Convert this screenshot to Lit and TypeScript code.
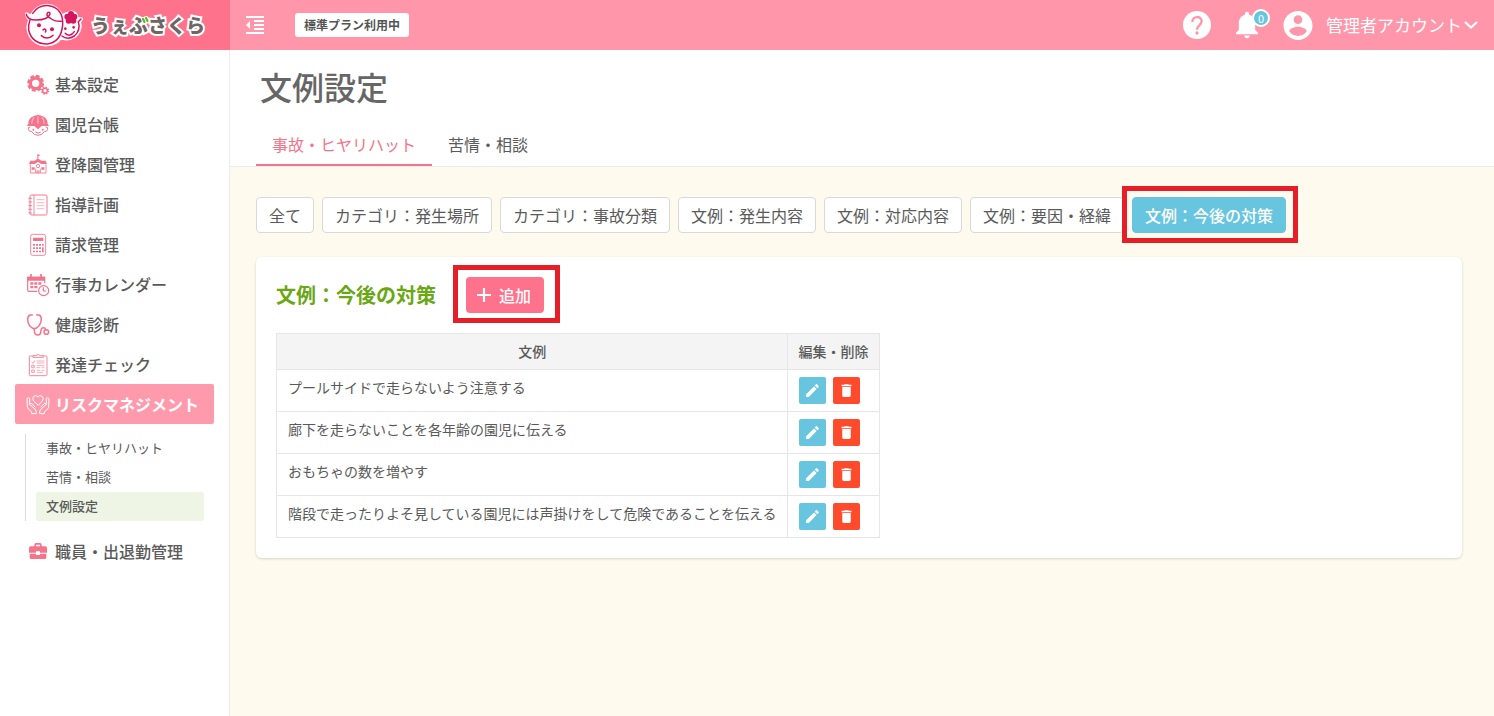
import { LitElement, html, css, svg } from "lit";
import { customElement, property, state } from "lit/decorators.js";
import { classMap } from "lit/directives/class-map.js";

const icons: Record<string, unknown> = {
  gears: svg`
    <g fill="none" stroke="currentColor">
      <circle cx="26" cy="31" r="16" stroke-width="10"/>
      <circle cx="26" cy="31" r="21.500" stroke-width="8" stroke-dasharray="11 5.880"/>
      <circle cx="54" cy="53" r="7" stroke-width="4.500"/>
      <circle cx="54" cy="53" r="10" stroke-width="4.500" stroke-dasharray="4.600 3.250"/>
    </g>`,
  child: svg`
    <path fill="currentColor" d="M4 32C4 16 17 8 30 7Q33 2 36 7C49 8 62 16 62 32L66 39H0Z"/>
    <g fill="none" stroke="#fff" stroke-width="1.800"><path d="M33 10V32M21 12Q15 21 14 32M45 12Q51 21 52 32"/></g>
    <g fill="none" stroke="currentColor" stroke-width="3">
      <path d="M10 42Q2 42 4 49Q6 56 14 56Q21 67 33 67Q45 67 52 56Q60 56 62 49Q64 42 56 42"/>
      <path d="M25 57Q33 64 41 57"/>
    </g>
    <g fill="currentColor"><path d="M22 39H44L33 49Z"/><circle cx="19" cy="50" r="3"/><circle cx="47" cy="50" r="3"/></g>`,
  school: svg`
    <g fill="currentColor">
      <path d="M32 3L40 7L34 10V17L43 23H56L60 33H43L33 27L23 33H6L10 23H23L31 17V3Z"/>
      <path d="M14 43h9v7h-9zM43 43h9v7h-9zM29 52h3v9h-3zM34 52h3v9h-3z"/>
    </g>
    <g fill="none" stroke="currentColor" stroke-width="2.600">
      <path d="M10 34V60H26V47M57 34V60H40V47M26 60H40"/><circle cx="33" cy="39" r="5"/>
    </g>`,
  notebook: svg`
    <g fill="none" stroke="currentColor" stroke-width="3">
      <rect x="9" y="6" width="51" height="60" rx="5"/><path d="M21 6V66" stroke-width="2.500"/>
      <path d="M4 16h11M4 27h11M4 38h11M4 49h11M4 60h11" stroke-width="2.600"/>
      <path d="M29 20H52M29 29H52M29 38H52M29 47H52" stroke-width="1.600"/>
    </g>`,
  calculator: svg`
    <rect x="11" y="4" width="45" height="63" rx="6" fill="none" stroke="currentColor" stroke-width="2.600"/>
    <path fill="currentColor" d="M18 14h31v10H18zM18 33h6v5h-6zM27 33h6v5h-6zM36 33h6v5h-6zM45 33h5v5h-5zM18 43h6v5h-6zM27 43h6v5h-6zM36 43h6v5h-6zM18 53h6v5h-6zM27 53h6v5h-6zM36 53h6v5h-6zM45 43h5v15h-5z"/>`,
  calendar: svg`
    <g fill="none" stroke="currentColor" stroke-width="3.500">
      <path d="M31 55H6Q2 55 2 51V13H53V31"/>
      <path d="M12 3V12M42 3V12" stroke-width="5"/>
      <circle cx="50" cy="53" r="15"/><path d="M49 43V54H58"/>
    </g>
    <path fill="currentColor" d="M1 11H54V23H1zM10 28h9v7h-9zM22 28h9v7h-9zM34 28h9v7h-9zM10 39h9v7h-9zM22 39h9v7h-9z"/>`,
  stethoscope: svg`
    <g fill="none" stroke="currentColor" stroke-width="4.500" stroke-linecap="round">
      <path d="M16 6H10Q2 8 2 19Q3 35 12 42Q22 52 32 42Q41 35 43 19Q43 8 36 6H29"/>
      <path d="M22 48V54Q22 66 33 66Q40 66 41 58Q42 44 49 44Q55 44 56 49"/>
      <circle cx="58" cy="57" r="7"/>
    </g>`,
  clipboard: svg`
    <g fill="none" stroke="currentColor" stroke-width="2.600">
      <path d="M18 9H10Q7 9 7 12V65Q7 68 10 68H56Q60 68 60 65V12Q60 9 56 9H49"/>
      <path d="M18 13V8H27Q33 0 40 8H49V13Z"/>
      <path d="M14 27L18 31L24 22M14 37h8v7h-8zM14 51h8v7h-8z" stroke-width="2.200"/>
      <path d="M29 24H52M29 30H52M29 38H52M29 44H40M44 44H52M29 52H40M44 52H52M29 58H48" stroke-width="1.800"/>
    </g>`,
  hands: svg`
    <g fill="none" stroke="currentColor" stroke-width="3" stroke-linejoin="round" stroke-linecap="round">
      <path d="M33 36L20 24Q14 17 20 10Q28 4 33 12Q38 4 46 10Q52 17 46 24Z"/>
      <path d="M1 16Q5 12 8 16V34L13 39L24 48Q29 53 28 62H14V56L3 47Q1 44 1 39Z"/>
      <path d="M65 16Q61 12 58 16V34L53 39L42 48Q37 53 38 62H52V56L63 47Q65 44 65 39Z"/>
      <path d="M8 34Q12 27 17 34L24 42M58 34Q54 27 49 34L42 42"/>
    </g>`,
  briefcase: svg`
    <path fill="currentColor" fill-rule="evenodd" d="M11 19H22V14Q22 9 27 9H39Q44 9 44 14V19H55Q60 19 60 24V38H39V34H27V38H6V24Q6 19 11 19ZM27 19H39V14H27Z"/>
    <path fill="currentColor" d="M8 41H27V45H39V41H58V53Q58 57 54 57H12Q8 57 8 53Z"/>`,
};

@customElement("nav-icon")
class NavIcon extends LitElement {
  @property() name = "";
  static styles = css`
    :host { display: block; width: 22px; height: 22px; flex: none; }
    svg { display: block; width: 100%; height: 100%; overflow: visible; }
  `;
  render() {
    return html`<svg viewBox="0 0 66 66" aria-hidden="true">${icons[this.name]}</svg>`;
  }
}

@customElement("app-header")
class AppHeader extends LitElement {
  static styles = css`
    :host { display: flex; height: 50px; background: #ff96aa; color: #fff; }
    * { box-sizing: border-box; }
    svg { display: block; }
    button { font: inherit; color: inherit; background: none; border: 0; padding: 0; cursor: pointer; }
    .logo { display: flex; align-items: center; gap: 8px; width: 230px; padding-left: 24px; background: #ff728c; color: #6f6565; text-decoration: none; }
    .name { position: relative; font-size: 19px; font-weight: 900; line-height: 28px; white-space: nowrap; -webkit-text-stroke: 4px #fff; paint-order: stroke fill; }
    .sprout { position: absolute; left: 50px; top: 5px; }
    .bar { flex: 1; display: flex; align-items: center; padding: 0 16px 0 13px; }
    .plan { margin-left: 28px; padding: 0 9px; line-height: 24px; border-radius: 3px; background: #fff; color: #555; font-size: 12px; font-weight: 700; }
    .tools { margin-left: auto; display: flex; align-items: center; gap: 25px; }
    .bell { position: relative; }
    .badge { position: absolute; left: 16px; top: -2px; width: 18px; height: 18px; border: 2px solid #fff; border-radius: 50%; background: #68c5df; font-size: 11px; line-height: 14px; text-align: center; }
    .account { display: flex; align-items: center; font-size: 17px; line-height: 28px; white-space: nowrap; }
    .account span { margin: 0 2px 0 13px; }
  `;
  render() {
    return html`
      <a class="logo" href="#" aria-label="うぇぶさくら">
        <svg width="59" height="44" viewBox="72 9 177 132" aria-hidden="true">
          <g fill="#fff" stroke="#fff" stroke-width="10" stroke-linejoin="round">
            <path d="M80 42Q82 54 90 58Q78 84 91 108Q108 136 142 134Q170 132 182 112Q202 122 225 108Q245 92 238 66L244 57L230 56Q232 40 215 36L198 42L185 48Q172 18 142 16Q111 16 96 45Q88 50 80 42Z"/>
          </g>
          <g fill="none" stroke="#d81460" stroke-width="4.500" stroke-linecap="round" stroke-linejoin="round">
            <path d="M79 43Q82 60 108 60Q145 60 150 42Q150 34 143 38Q136 46 150 54Q164 65 184 64"/>
            <path d="M98 40Q116 14 147 17Q190 24 188 74Q184 126 142 132Q96 132 86 90Q84 76 90 60"/>
            <path d="M124 107Q141 122 159 106"/>
            <path d="M129 90Q133 84 137 89Q139 92 136 96"/>
            <path d="M186 108Q203 121 223 108Q243 90 235 65Q238 62 243 57"/>
            <path d="M196 100Q210 113 223 95"/>
          </g>
          <g fill="#d81460">
            <circle cx="117" cy="76" r="6"/><circle cx="156" cy="88" r="6"/><circle cx="196" cy="86" r="4"/><circle cx="221" cy="82" r="4"/>
            <circle cx="213" cy="42" r="9"/><circle cx="202" cy="50" r="9"/><circle cx="223" cy="50" r="9"/><circle cx="206" cy="62" r="9"/><circle cx="220" cy="62" r="9"/><circle cx="213" cy="53" r="9"/>
          </g>
        </svg>
        <span class="name">うぇぶさくら
          <svg class="sprout" width="9" height="9" viewBox="0 0 9 9" aria-hidden="true"><g fill="none" stroke-linecap="round"><path d="M2 3L3.500 6M5 2L6.500 5" stroke="#fff" stroke-width="4"/><path d="M2 3L3.500 6M5 2L6.500 5" stroke="#62b52c" stroke-width="2.200"/></g></svg>
        </span>
      </a>
      <div class="bar">
        <button aria-label="メニューを閉じる">
          <svg width="24" height="24" viewBox="0 0 24 24" fill="#fff"><path d="M11 17h10v-2H11v2zm-8-5l4 4V8l-4 4zm0 9h18v-2H3v2zM3 3v2h18V3H3zm8 6h10V7H11v2zm0 4h10v-2H11v2z"/></svg>
        </button>
        <span class="plan">標準プラン利用中</span>
        <div class="tools">
          <button aria-label="ヘルプ">
            <svg width="28" height="28" viewBox="-42 -42 84 84"><circle r="42" fill="#fff"/><path d="M-14 -9C-14 -29 14 -28 14 -11C14 0 0 1 0 14" fill="none" stroke="#ff96aa" stroke-width="7"/><circle cy="24" r="5" fill="#ff96aa"/></svg>
          </button>
          <button class="bell" aria-label="お知らせ">
            <svg width="22" height="28" viewBox="4 2 16 20.500" fill="#fff"><path d="M12 22c1.100 0 2-.9 2-2h-4c0 1.100.89 2 2 2zm6-6v-5c0-3.070-1.640-5.640-4.500-6.320V4c0-.83-.67-1.500-1.500-1.500s-1.500.67-1.500 1.500v.68C7.630 5.360 6 7.920 6 11v5l-2 2v1h16v-1l-2-2z"/></svg>
            <span class="badge">0</span>
          </button>
          <button class="account">
            <svg width="30" height="29" viewBox="2 2 20 20" fill="#fff"><path d="M12 2C6.480 2 2 6.480 2 12s4.480 10 10 10 10-4.480 10-10S17.520 2 12 2zm0 3c1.660 0 3 1.340 3 3s-1.340 3-3 3-3-1.340-3-3 1.340-3 3-3zm0 14.200c-2.500 0-4.710-1.280-6-3.220.03-1.990 4-3.080 6-3.080 1.990 0 5.970 1.090 6 3.080-1.290 1.940-3.500 3.220-6 3.220z"/></svg>
            <span>管理者アカウント</span>
            <svg width="14" height="10" viewBox="0 0 14 10"><path d="M1 2L7 7.500L13 2" fill="none" stroke="#fff" stroke-width="2.200"/></svg>
          </button>
        </div>
      </div>`;
  }
}

interface NavItem { icon: string; label: string; children?: string[]; }

const navItems: NavItem[] = [
  { icon: "gears", label: "基本設定" },
  { icon: "child", label: "園児台帳" },
  { icon: "school", label: "登降園管理" },
  { icon: "notebook", label: "指導計画" },
  { icon: "calculator", label: "請求管理" },
  { icon: "calendar", label: "行事カレンダー" },
  { icon: "stethoscope", label: "健康診断" },
  { icon: "clipboard", label: "発達チェック" },
  { icon: "hands", label: "リスクマネジメント", children: ["事故・ヒヤリハット", "苦情・相談", "文例設定"] },
  { icon: "briefcase", label: "職員・出退勤管理" },
];

@customElement("side-nav")
class SideNav extends LitElement {
  static styles = css`
    :host { display: block; box-sizing: border-box; width: 230px; flex: none; padding: 14px 15px; background: #fff; border-right: 1px solid #ececec; }
    ul { list-style: none; margin: 0; padding: 0; }
    a { color: #5a5a5a; text-decoration: none; }
    .item { display: flex; align-items: center; gap: 6px; height: 40px; padding-left: 12px; border-radius: 2px; font-size: 16px; font-weight: 500; line-height: 24px; white-space: nowrap; }
    .item nav-icon { color: #f5748c; }
    .open, .open nav-icon { color: #fff; }
    .open { background: #ff9aad; font-weight: 700; }
    .sub { margin: 10px; padding-left: 10px; border-left: 1px solid #ddd; }
    .sub a { display: block; padding: 0 0 2px 10px; border-radius: 2px; font-size: 13px; line-height: 27px; }
    .sub .current { background: #eff5e5; font-weight: 500; }
  `;
  render() {
    return html`<nav><ul>${navItems.map((item) => html`
      <li>
        <a href="#" class=${classMap({ item: true, open: !!item.children })}><nav-icon name=${item.icon}></nav-icon>${item.label}</a>
        ${item.children ? html`<ul class="sub">${item.children.map((c) => html`
          <li><a href="#" class=${classMap({ current: c === "文例設定" })}>${c}</a></li>`)}</ul>` : ""}
      </li>`)}</ul></nav>`;
  }
}

@customElement("app-root")
class AppRoot extends LitElement {
  @state() private selected = "文例：今後の対策";

  private filters = ["全て", "カテゴリ：発生場所", "カテゴリ：事故分類", "文例：発生内容", "文例：対応内容", "文例：要因・経緯", "文例：今後の対策"];
  private rows = [
    "プールサイドで走らないよう注意する",
    "廊下を走らないことを各年齢の園児に伝える",
    "おもちゃの数を増やす",
    "階段で走ったりよそ見している園児には声掛けをして危険であることを伝える",
  ];

  static styles = css`
    :host { display: flex; flex-direction: column; min-height: 100vh; font-family: "Noto Sans CJK JP", "Noto Sans", sans-serif; color: #5a5a5a; }
    * { box-sizing: border-box; }
    button { font: inherit; cursor: pointer; }
    svg { display: block; }
    .body { flex: 1; display: flex; }
    main { flex: 1; min-width: 0; background: #fffaee; }
    .head { padding: 12px 26px 0; background: #fff; border-bottom: 1px solid #ececec; }
    h1 { margin: 0 0 14px; padding-left: 4px; font-size: 32px; font-weight: 500; line-height: 48px; color: #666; }
    .tabs { display: flex; }
    .tab { padding: 0 16px; border-bottom: 2px solid transparent; color: #5a5a5a; font-size: 16px; line-height: 40px; text-decoration: none; }
    .tab.active { border-color: #f5748c; color: #f5748c; }
    .content { padding: 30px 32px 30px 26px; }
    .filters { display: flex; flex-wrap: wrap; gap: 8px; margin-bottom: 24px; }
    .filter { height: 36px; padding: 0 12px; border: 1px solid #d9d9d9; border-radius: 4px; background: #fff; color: #5a5a5a; font-size: 16px; line-height: 24px; white-space: nowrap; }
    .filter.selected { position: relative; border-color: #68c5df; background: #68c5df; color: #fff; font-weight: 500; }
    .filter.selected::after, .add::after { content: ""; position: absolute; border: 5px solid #e61e27; pointer-events: none; }
    .filter.selected::after { inset: -12px -13px -11px -11px; }
    .add::after { inset: -12px -16px -10px -13px; }
    .card { padding: 20px; border-radius: 6px; background: #fff; box-shadow: 0 1px 3px rgba(0, 0, 0, 0.16); }
    .title { display: flex; align-items: center; gap: 30px; margin-bottom: 20px; }
    h2 { margin: 0; font-size: 20px; font-weight: 700; line-height: 30px; color: #6aa715; }
    .add { position: relative; display: flex; align-items: center; gap: 7px; height: 36px; padding: 0 13px 0 10px; border: 0; border-radius: 4px; background: #ff728c; color: #fff; font-size: 16px; font-weight: 500; line-height: 24px; }
    table { border-collapse: collapse; font-size: 14px; line-height: 21px; }
    th, td { padding: 7px 10px 7px 11px; border: 1px solid #e6e6e6; text-align: left; vertical-align: top; }
    th { background: #f4f4f4; font-weight: 500; text-align: center; }
    .actions { display: flex; gap: 7px; }
    .icon { display: grid; place-items: center; width: 27px; height: 27px; padding: 0; border: 0; border-radius: 2px; background: #68c5df; }
    .icon.delete { background: #ff4a2c; }
  `;

  render() {
    return html`
      <app-header></app-header>
      <div class="body">
        <side-nav></side-nav>
        <main>
          <div class="head">
            <h1>文例設定</h1>
            <div class="tabs">
              <a class="tab active" href="#">事故・ヒヤリハット</a>
              <a class="tab" href="#">苦情・相談</a>
            </div>
          </div>
          <div class="content">
            <div class="filters">
              ${this.filters.map((f) => html`<button class=${classMap({ filter: true, selected: f === this.selected })} @click=${() => (this.selected = f)}>${f}</button>`)}
            </div>
            <section class="card">
              <div class="title">
                <h2>${this.selected}</h2>
                <button class="add">
                  <svg width="16" height="16" viewBox="0 0 16 16" aria-hidden="true"><path d="M8 1V15M1 8H15" stroke="#fff" stroke-width="2.200"/></svg>追加
                </button>
              </div>
              <table>
                <thead><tr><th>文例</th><th>編集・削除</th></tr></thead>
                <tbody>
                  ${this.rows.map((r) => html`<tr><td>${r}</td><td><div class="actions">
                    <button class="icon" aria-label="編集"><svg width="17" height="17" viewBox="0 0 24 24" fill="#fff"><path d="M3 17.250V21h3.750L17.810 9.940l-3.750-3.750L3 17.250zM20.710 7.040c.39-.39.39-1.020 0-1.410l-2.340-2.340c-.39-.39-1.020-.39-1.410 0l-1.830 1.830 3.750 3.750 1.830-1.830z"/></svg></button>
                    <button class="icon delete" aria-label="削除"><svg width="17" height="17" viewBox="0 0 24 24" fill="#fff"><path d="M6 19c0 1.100.9 2 2 2h8c1.100 0 2-.9 2-2V7H6v12zM19 4h-3.500l-1-1h-5l-1 1H5v2h14V4z"/></svg></button>
                  </div></td></tr>`)}
                </tbody>
              </table>
            </section>
          </div>
        </main>
      </div>`;
  }
}
